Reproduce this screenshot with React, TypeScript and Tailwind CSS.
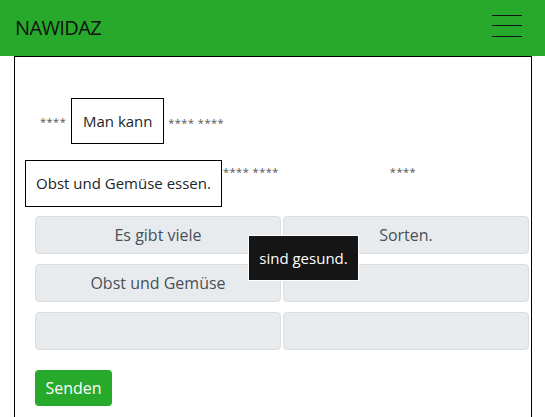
import React from "react";

const font = { fontFamily: '"Open Sans", "Noto Sans", "Liberation Sans", sans-serif' };

function Stars({ children }: { children: React.ReactNode }) {
  return <span className="text-[11px] leading-none text-[#555] tracking-[0.5px]">{children}</span>;
}

export default function App() {
  return (
    <div className="w-[545px] h-[417px] overflow-hidden bg-white relative" style={font}>
      <header className="h-[56px] bg-[#27a92c] flex items-start justify-between pl-[15px] pr-[23px]">
        <span className="mt-[15px] text-[20px] leading-[26px] text-[#111] tracking-[-0.6px]">NAWIDAZ</span>
        <div className="flex flex-col pt-[15px]">
          <div className="w-[30px] h-px bg-[#111]" />
          <div className="w-[30px] h-px bg-[#111] mt-[9px]" />
          <div className="w-[30px] h-px bg-[#111] mt-[10px]" />
        </div>
      </header>
      <div className="ml-[14px] w-[518px] border border-black h-[400px] relative">
        <div className="pt-[41px] pl-[25px] flex items-center h-[87px]">
          <Stars>****</Stars>
          <span className="ml-[5px] border border-black h-[46px] w-[93px] flex items-center justify-center text-[15px] text-[#212529]">
            Man kann
          </span>
          <span className="ml-[4px]">
            <Stars>**** ****</Stars>
          </span>
        </div>
        <div className="mt-[16px] pl-[10px] flex items-start h-[46px] leading-none">
          <span className="border border-black h-[47px] w-[197px] flex items-center justify-center text-[15px] leading-normal text-[#212529]">
            Obst und Gemüse essen.
          </span>
          <span className="mt-[2px] ml-px leading-none">
            <Stars>**** ****</Stars>
          </span>
          <span className="mt-[2px] ml-[111px] leading-none">
            <Stars>****</Stars>
          </span>
        </div>
        <div className="mt-[10px] ml-[20px] w-[494px] grid grid-cols-2 gap-x-[2px] gap-y-[10px]">
          {["Es gibt viele", "Sorten.", "Obst und Gemüse", "", "", ""].map((t, i) => (
            <div
              key={i}
              className="h-[38px] bg-[#e8ebee] border border-[#dcdcdc] rounded-[4px] flex items-center justify-center text-[16px] text-[#495057]"
            >
              {t}
            </div>
          ))}
        </div>
        <button className="mt-[20px] ml-[20px] h-[36px] w-[77px] bg-[#27a92c] rounded-[4px] text-white text-[16px]">
          Senden
        </button>
        <div className="absolute left-[233px] top-[178px] w-[111px] h-[46px] bg-[#151515] border border-white flex items-center justify-center text-white text-[15px]">
          sind gesund.
        </div>
      </div>
    </div>
  );
}
